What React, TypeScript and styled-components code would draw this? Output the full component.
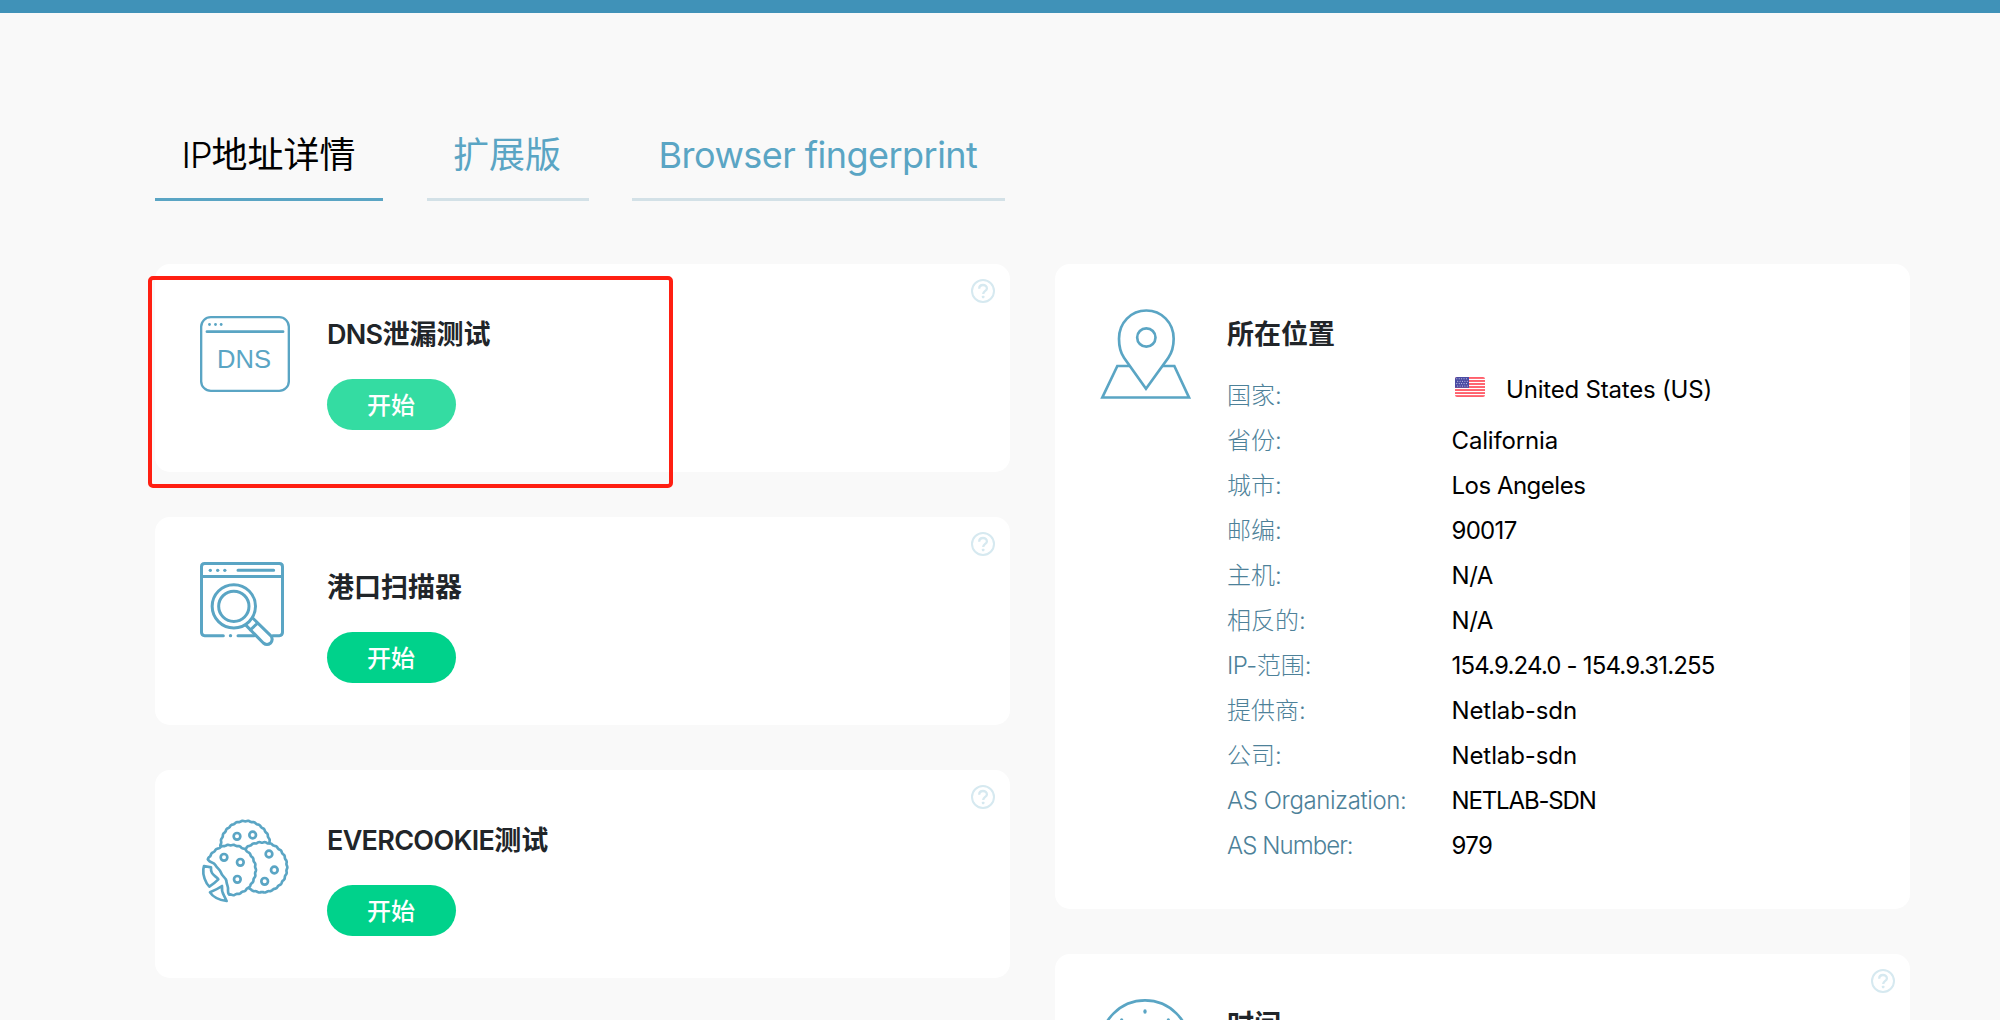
import React from "react";
import styled, { createGlobalStyle } from "styled-components";

const GlobalStyle = createGlobalStyle`
  *, *::before, *::after { box-sizing: border-box; }
  body {
    margin: 0;
    background: #f9f9f9;
    color: #000;
    font-family: Inter, "Noto Sans CJK SC", sans-serif;
  }
`;

const Page = styled.div`
  position: relative;
  width: 2000px;
  height: 1020px;
  overflow: hidden;
`;

const TopBar = styled.header`
  height: 13px;
  background: #4092b8;
`;

const Main = styled.main`
  width: 1755px;
  margin: 115px 0 0 155px;
`;

const Tabs = styled.nav`
  display: flex;
  gap: 43.5px;
`;

const Tab = styled.a<{ $active?: boolean }>`
  padding: 0 27.5px 15px 26.5px;
  border-bottom: 3px solid ${(p) => (p.$active ? "#5aa5c4" : "#d3e1e7")};
  color: ${(p) => (p.$active ? "#000" : "#5aa5c4")};
  font-size: 36px;
  line-height: 55px;
  white-space: nowrap;
`;

const Latin = styled.span<{ $tracking: number; $light?: boolean }>`
  letter-spacing: ${(p) => p.$tracking}px;
  font-weight: ${(p) => (p.$light ? 300 : "inherit")};
`;

const Columns = styled.div`
  display: grid;
  grid-template-columns: 855px 855px;
  gap: 45px;
  margin-top: 63px;
  align-items: start;
`;

const Column = styled.div`
  display: flex;
  flex-direction: column;
  gap: 45px;
`;

const CardBox = styled.section`
  position: relative;
  display: flex;
  gap: 35px;
  min-height: 208px;
  padding: 45px 45px 41px;
  border-radius: 15px;
  background: #fff;
`;

const IconSvg = styled.svg`
  flex: none;
  width: 92px;
  height: 92px;
  overflow: visible;
  fill: none;
  stroke: #5aa5c4;
`;

const Body = styled.div`
  flex: 1;
  padding-top: 8px;
`;

const Title = styled.h2`
  margin: 0;
  color: #212529;
  font-size: 27px;
  font-weight: 700;
  line-height: 36px;
  white-space: nowrap;

  ${Latin} { font-weight: 600; }
`;

const StartButton = styled.button<{ $hover?: boolean }>`
  display: flex;
  align-items: center;
  justify-content: center;
  width: 129px;
  height: 51px;
  margin-top: 26px;
  padding: 3px 1px 0 0;
  border: 0;
  border-radius: 26px;
  background: ${(p) => (p.$hover ? "#34dca2" : "#00d28b")};
  color: #fff;
  font: 500 24px/24px Inter, "Noto Sans CJK SC", sans-serif;
`;

const HelpSvg = styled.svg`
  position: absolute;
  top: 15px;
  right: 15px;
  width: 24px;
  height: 24px;
  fill: none;
  stroke: #d6e9f0;
`;

const List = styled.dl`
  margin: 20px 0 0;
`;

const Row = styled.div`
  display: flex;
  height: 45px;
  line-height: 46px;
  font-size: 24px;
  white-space: nowrap;
`;

const Label = styled.dt`
  width: 224.5px;
  color: #4d8199;
  font-weight: 300;
`;

const Value = styled.dd<{ $tracking: number }>`
  margin: 0;
  letter-spacing: ${(p) => p.$tracking}px;
`;

const CountryValue = styled(Value)`
  display: flex;
  gap: 21px;
  height: 33px;
  padding-left: 3.5px;
  line-height: 33px;
`;

const FlagSvg = styled.svg`
  width: 30px;
  height: 20px;
  margin-top: 4px;
`;

const Highlight = styled.div`
  position: absolute;
  left: 147.5px;
  top: 275.5px;
  width: 525px;
  height: 212px;
  border: 4px solid #ff1f12;
  border-radius: 5px;
  pointer-events: none;
`;

const DnsIcon = () => (
  <IconSvg viewBox="0 0 276 276" strokeWidth="7">
    <rect x="3.5" y="24.5" width="263" height="221" rx="29" />
    <path d="M21 68H249" strokeWidth="8.5" strokeLinecap="round" />
    <g fill="#5aa5c4" stroke="none">
      <circle cx="28.5" cy="46.5" r="4.2" />
      <circle cx="46.5" cy="46.5" r="4.2" />
      <circle cx="63.5" cy="46.5" r="4.2" />
      <text x="51" y="178" fontSize="80" fontFamily="Liberation Sans, Arial, sans-serif" textLength="162" lengthAdjust="spacingAndGlyphs">
        DNS
      </text>
    </g>
  </IconSvg>
);

const ScanIcon = () => (
  <IconSvg viewBox="180 156 276 276" strokeWidth="9" strokeLinecap="round" strokeLinejoin="round">
    <path d="M250 377H194Q184.500 377 184.500 367V170Q184.500 160.500 194 160.500H418Q427.500 160.500 427.500 170V367Q427.500 377 418 377H398" />
    <path d="M185 199.500H427M294 181H401M294 377H342" />
    <circle cx="281.500" cy="289" r="65" />
    <circle cx="281.500" cy="289" r="45.500" />
    <path d="M338 324L392 377Q401 388 392 399Q381 408 370 399L319 347M331 360L353 339" />
    <g fill="#5aa5c4" stroke="none">
      <circle cx="211" cy="181" r="5" />
      <circle cx="233" cy="181" r="5" />
      <circle cx="254.500" cy="181" r="5" />
      <circle cx="271.500" cy="377" r="5" />
    </g>
  </IconSvg>
);

/* Arc with a rippled rim, running clockwise between two angles in degrees. */
const rippledArc = (cx: number, cy: number, r: number, from: number, to: number) => {
  const points: string[] = [];
  for (let a = from; a <= to; a += 2) {
    const t = (a * Math.PI) / 180;
    const rr = r + 1.1 * Math.cos(t * 26);
    points.push(`${(cx + rr * Math.cos(t)).toFixed(1)} ${(cy + rr * Math.sin(t)).toFixed(1)}`);
  }
  return `M${points.join("L")}`;
};

const chips = [
  [291, 229], [338, 225], [252, 292], [301, 307],
  [292, 358], [387, 282], [403, 330], [374, 364],
];

const CookieIcon = () => (
  <IconSvg viewBox="180 165 276 276" strokeWidth="8" strokeLinecap="round" strokeLinejoin="round">
    <path d={rippledArc(316, 257, 74, 180, 354)} />
    <path d={rippledArc(366, 322, 75, 230, 480)} />
    <path d={rippledArc(272, 330, 75, 206, 452)} />
    <path d="M204 299C212 310 220 305 226 315C230 324 240 328 243 338C246 350 258 352 259 363C261 378 266 380 264 391Q264 405 271 404" />
    <path d="M192 318L213 322Q212 334 216 339C220 347 232 352 235 358Q223 370 208 380C196 368 188 345 190 328Z" />
    <path d="M210 397Q230 389 246 378C244 392 248 400 252 407L260 423C240 420 220 413 210 397Z" />
    {chips.map(([cx, cy]) => (
      <circle key={`${cx}-${cy}`} cx={cx} cy={cy} r="10" />
    ))}
  </IconSvg>
);

const PinIcon = () => (
  <IconSvg viewBox="180 177 276 276" strokeWidth="8">
    <path d="M318 416L252 323C241 307 237 288 237 266C237 218 273 181.500 319 181.500C365 181.500 401 218 401 266C401 288 396 307 385 323Z" />
    <circle cx="319" cy="262.500" r="27.500" />
    <path d="M270 348H232L187 442.500H447L403 348H366" />
  </IconSvg>
);

const ClockIcon = () => (
  <IconSvg viewBox="180 297 276 276" strokeWidth="8">
    <circle cx="315" cy="434" r="133" />
    <g fill="#5aa5c4" stroke="none">
      <ellipse cx="315" cy="334.500" rx="5" ry="7" />
      <ellipse cx="245" cy="361" rx="5" ry="6" />
      <ellipse cx="385" cy="361" rx="5" ry="6" />
    </g>
    <path d="M315 370V434L355 460" />
  </IconSvg>
);

const HelpIcon = () => (
  <HelpSvg viewBox="0 0 24 24" strokeWidth="2">
    <circle cx="12" cy="12" r="11" />
    <path d="M8.200 9.700C8.200 7.500 9.800 6 12 6S15.900 7.400 15.900 9.400C15.900 11.900 12.200 12 12.200 15" strokeWidth="2.300" />
    <rect x="10.900" y="16.700" width="2.500" height="2.500" rx="0.600" fill="#d6e9f0" stroke="none" />
  </HelpSvg>
);

const UsFlag = () => (
  <FlagSvg viewBox="0 0 30 20">
    <clipPath id="flagShape">
      <rect width="30" height="20" rx="2" />
    </clipPath>
    <g clipPath="url(#flagShape)">
      <rect width="30" height="20" fill="#fff" />
      {[0, 1, 2, 3, 4, 5, 6].map((i) => (
        <rect key={i} y={i * 3.02} width="30" height="1.9" fill="#ff5f6b" />
      ))}
      <rect width="14" height="10.800" fill="#4a4ba3" />
      {[0, 1, 2, 3].map((r) =>
        [0, 1, 2, 3, 4].map((c) => (
          <circle key={`${r}-${c}`} cx={1.8 + c * 2.4 + (r % 2) * 0.9} cy={1.8 + r * 2.4} r="0.550" fill="#d5d5ee" />
        ))
      )}
    </g>
  </FlagSvg>
);

interface TestCardProps {
  icon: React.ReactNode;
  latin?: string;
  tracking?: number;
  name: string;
  hover?: boolean;
}

const TestCard = ({ icon, latin, tracking = 0, name, hover }: TestCardProps) => (
  <CardBox>
    {icon}
    <Body>
      <Title>
        {latin && <Latin $tracking={tracking}>{latin}</Latin>}
        {name}
      </Title>
      <StartButton $hover={hover}>开始</StartButton>
    </Body>
    <HelpIcon />
  </CardBox>
);

interface Detail {
  latin?: string;
  latinTracking?: number;
  label?: string;
  value: string;
  tracking: number;
}

const details: Detail[] = [
  { label: "省份:", value: "California", tracking: -0.15 },
  { label: "城市:", value: "Los Angeles", tracking: -0.5 },
  { label: "邮编:", value: "90017", tracking: -0.7 },
  { label: "主机:", value: "N/A", tracking: -0.4 },
  { label: "相反的:", value: "N/A", tracking: -0.4 },
  { latin: "IP-", latinTracking: -0.5, label: "范围:", value: "154.9.24.0 - 154.9.31.255", tracking: -0.82 },
  { label: "提供商:", value: "Netlab-sdn", tracking: -0.1 },
  { label: "公司:", value: "Netlab-sdn", tracking: -0.1 },
  { latin: "AS Organization:", latinTracking: -0.42, value: "NETLAB-SDN", tracking: -1.15 },
  { latin: "AS Number:", latinTracking: -0.95, value: "979", tracking: -0.6 },
];

export default function App() {
  return (
    <Page>
      <GlobalStyle />
      <TopBar />
      <Main>
        <Tabs>
          <Tab $active>
            <Latin $tracking={-1} $light>IP</Latin>地址详情
          </Tab>
          <Tab>扩展版</Tab>
          <Tab>
            <Latin $tracking={-0.54}>Browser fingerprint</Latin>
          </Tab>
        </Tabs>
        <Columns>
          <Column>
            <TestCard icon={<DnsIcon />} latin="DNS" tracking={-0.7} name="泄漏测试" hover />
            <TestCard icon={<ScanIcon />} name="港口扫描器" />
            <TestCard icon={<CookieIcon />} latin="EVERCOOKIE" tracking={-0.7} name="测试" />
          </Column>
          <Column>
            <CardBox>
              <PinIcon />
              <Body>
                <Title>所在位置</Title>
                <List>
                  <Row>
                    <Label>国家:</Label>
                    <CountryValue $tracking={-0.2}>
                      <UsFlag />
                      United States (US)
                    </CountryValue>
                  </Row>
                  {details.map((d, i) => (
                    <Row key={i}>
                      <Label>
                        {d.latin && <Latin $tracking={d.latinTracking ?? 0}>{d.latin}</Latin>}
                        {d.label}
                      </Label>
                      <Value $tracking={d.tracking}>{d.value}</Value>
                    </Row>
                  ))}
                </List>
              </Body>
            </CardBox>
            <CardBox>
              <ClockIcon />
              <Body>
                <Title>时间</Title>
              </Body>
              <HelpIcon />
            </CardBox>
          </Column>
        </Columns>
      </Main>
      <Highlight />
    </Page>
  );
}
